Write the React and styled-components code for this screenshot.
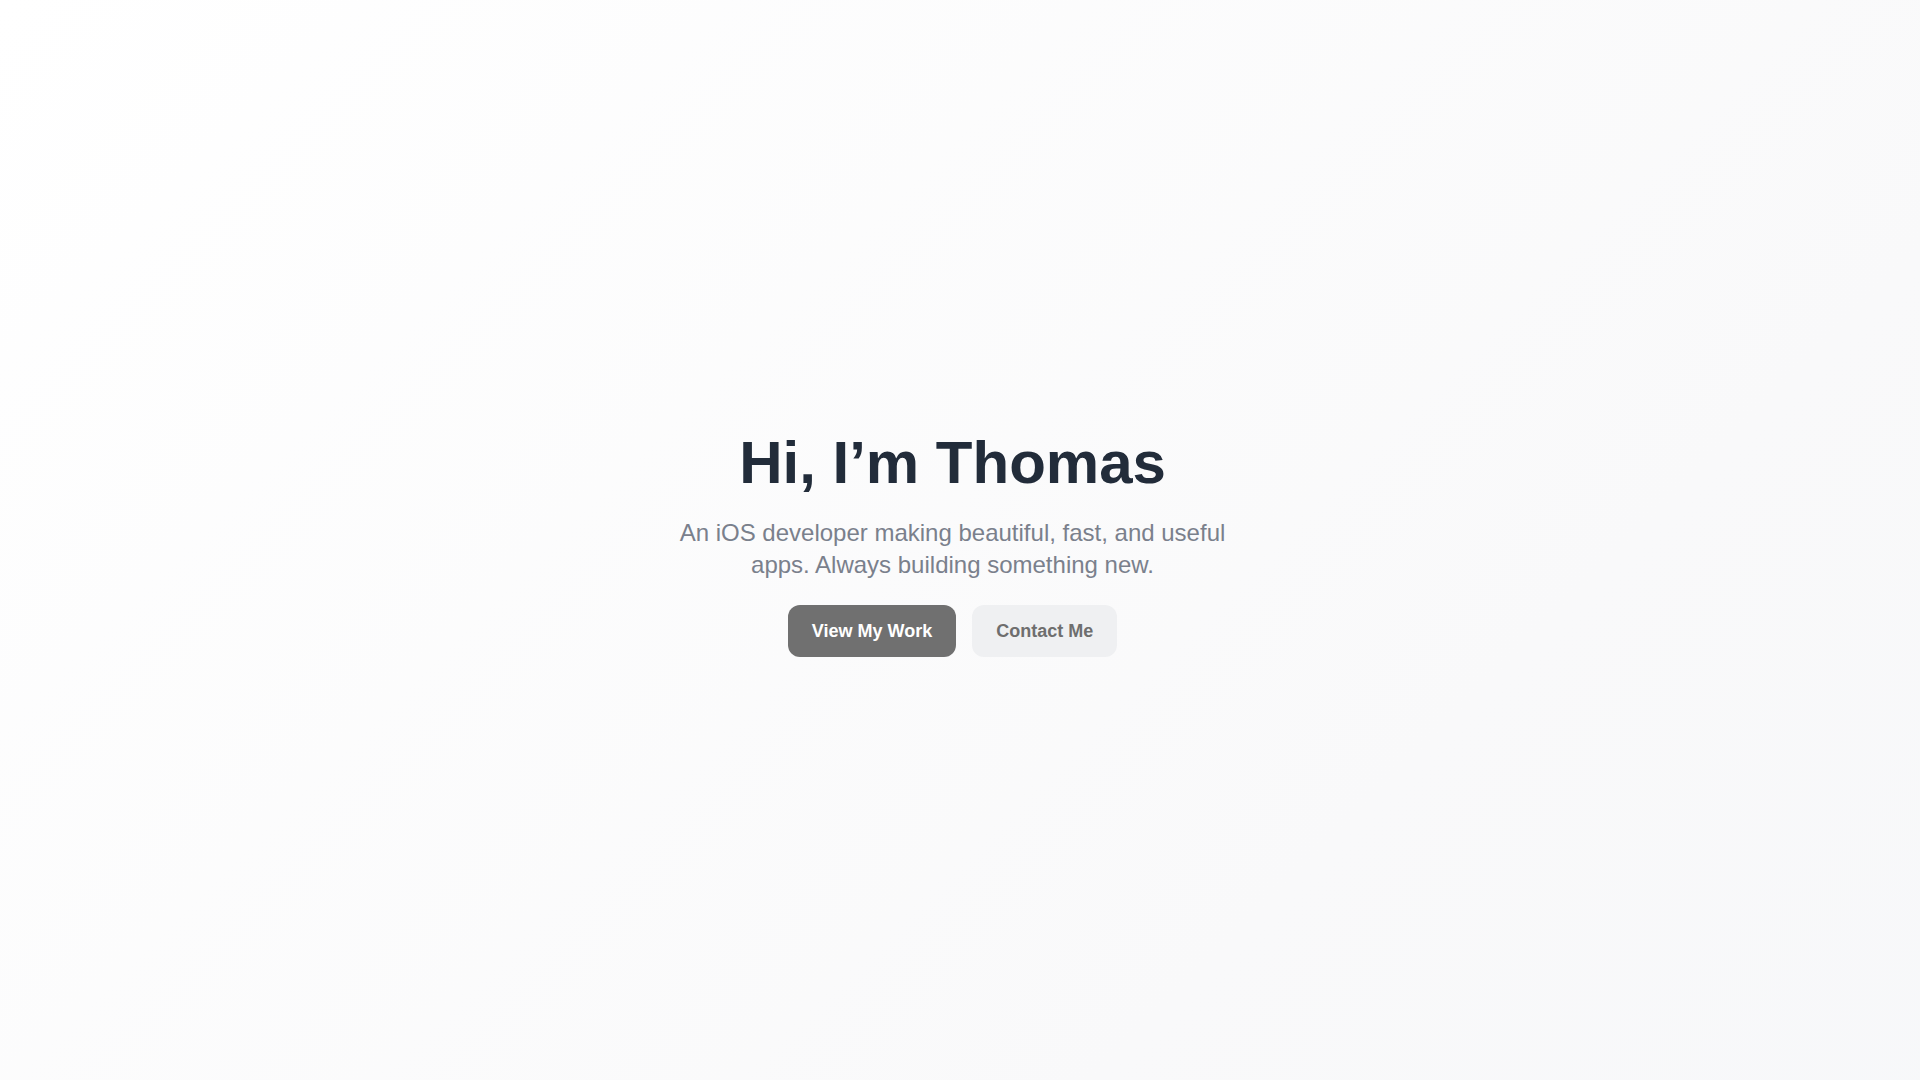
import React from 'react';
import styled, { createGlobalStyle } from 'styled-components';

const GlobalStyle = createGlobalStyle`
  html, body {
    margin: 0;
    padding: 0;
  }
  body {
    font-family: "Liberation Sans", Arial, Helvetica, sans-serif;
    background-color: #f7f8fa;
    color: #1f2937;
  }
  * {
    box-sizing: border-box;
  }
`;

const Page = styled.div`
  background: linear-gradient(135deg, #ffffff 0%, #f9f9fa 50%, #f4f6f9 100%);
`;

const Hero = styled.section`
  height: 100vh;
  padding: 9px 15px 0 0;
  display: flex;
  flex-direction: column;
  align-items: center;
  justify-content: center;
  text-align: center;
`;

const Title = styled.h1`
  margin: 0 0 24px 0;
  font-size: 60px;
  line-height: 1;
  font-weight: 700;
  color: #222c3a;
`;

const Subtitle = styled.p`
  margin: 0 0 24px 0;
  max-width: 576px;
  font-size: 24px;
  line-height: 32px;
  color: #7a808c;
`;

const Actions = styled.div`
  display: flex;
  gap: 16px;
`;

const Button = styled.a`
  display: inline-block;
  padding: 12px 24px;
  border-radius: 12px;
  font-size: 18px;
  line-height: 28px;
  font-weight: 700;
  text-decoration: none;
  cursor: pointer;
  background-color: ${(p) => (p.$primary ? '#707070' : '#eff0f2')};
  color: ${(p) => (p.$primary ? '#ffffff' : '#6e6e6e')};
`;

const WorkSection = styled.section`
  min-height: 1353px;
`;

const App = () => {
  return (
    <Page>
      <GlobalStyle />
      <Hero>
        <Title>Hi, I’m Thomas</Title>
        <Subtitle>
          An iOS developer making beautiful, fast, and useful apps. Always
          building something new.
        </Subtitle>
        <Actions>
          <Button $primary href="#work">View My Work</Button>
          <Button href="#contact">Contact Me</Button>
        </Actions>
      </Hero>
      <WorkSection id="work" />
    </Page>
  );
};

export default App;
